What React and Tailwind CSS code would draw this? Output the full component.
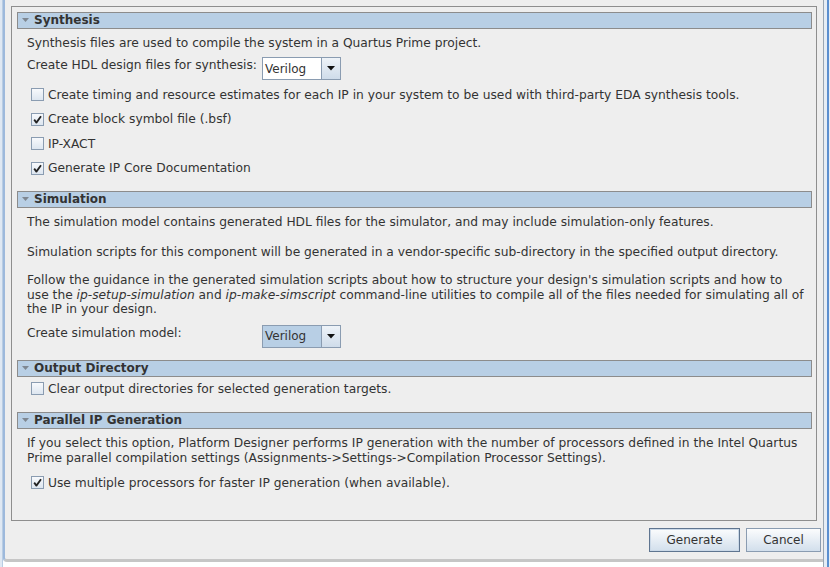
import React from "react";

const font = { fontFamily: '"DejaVu Sans", Verdana, sans-serif' };

const SectionHeader = ({ title }) => (
  <div className="h-[17px] flex items-center bg-[#b8cfe5] border border-[#8c8c8c]">
    <svg width="7" height="5" viewBox="0 0 7 5" className="ml-[4px] mr-[5px]">
      <polygon points="0,0 7,0 3.5,4" fill="#7f8791" />
    </svg>
    <span className="text-[12px] font-bold leading-[15px] text-[#333333]">{title}</span>
  </div>
);

const CheckBox = ({ checked }) => (
  <span className="w-[13px] h-[13px] shrink-0 border border-[#8a9cb1] bg-gradient-to-b from-[#f7f9fc] to-[#dde6f0] flex items-center justify-center">
    {checked && (
      <svg width="9" height="9" viewBox="0 0 9 9">
        <path d="M1.2 4.6 L3.4 7.6 L8 1.2" fill="none" stroke="#222" strokeWidth="1.8" strokeLinejoin="round" />
      </svg>
    )}
  </span>
);

const CheckRow = ({ checked, label, h = "h-[24px]" }) => (
  <div className={`${h} flex items-center pl-[14px] gap-[4px]`}>
    <CheckBox checked={checked} />
    <span>{label}</span>
  </div>
);

const Combo = ({ active }) => (
  <div className="w-[79px] h-[23px] flex border border-[#8a9cb1] bg-white">
    <div
      className={`flex-1 flex items-center pl-[2px] border-r border-[#8a9cb1] ${
        active ? "bg-[#b8cfe5]" : ""
      }`}
    >
      <span className="text-[12px]">Verilog</span>
    </div>
    <div className="w-[18px] flex items-center justify-center bg-gradient-to-b from-[#eef3f8] to-[#cfdcea]">
      <svg width="8" height="5" viewBox="0 0 8 5">
        <polygon points="0,0 8,0 4,4.5" fill="#111" />
      </svg>
    </div>
  </div>
);

const Button = ({ label, width, focused }) => (
  <button
    className={`${width} h-[24px] text-[12px] text-[#333333] bg-gradient-to-b from-[#fbfcfd] to-[#d2dfec] border ${
      focused ? "border-[#5f7590] shadow-[inset_0_0_0_1px_#cbd9e8]" : "border-[#8a9cb1]"
    }`}
  >
    {label}
  </button>
);

export default function App() {
  return (
    <div className="w-[830px] h-[567px] bg-white flex overflow-hidden text-[#333333]" style={font}>
      <div className="w-[3px] h-full bg-[#dfe8f3] border-r border-[#b9cde3]"></div>
      <div className="w-[820px] h-[562px] bg-[#eeeeee] border-l-[2px] border-[#9db9dc] border-b-[3px] border-b-[#c6c6c6] rounded-bl-[4px] flex flex-col">
        <div className="mt-[6px] ml-[6px] w-[806px] h-[515px] border border-[#8e8e8e] pl-[5px] pr-[4px] pt-[5px] text-[12.25px] leading-[16px]">
          {/* Synthesis */}
          <SectionHeader title="Synthesis" />
          <div className="h-[28px] flex items-center pl-[10px]">
            Synthesis files are used to compile the system in a Quartus Prime project.
          </div>
          <div className="h-[25px] flex items-start pl-[10px]">
            <span className="w-[235px]">Create HDL design files for synthesis:</span>
            <Combo />
          </div>
          <CheckRow
            h="h-[25px]"
            label="Create timing and resource estimates for each IP in your system to be used with third-party EDA synthesis tools."
          />
          <CheckRow h="h-[24px]" checked label="Create block symbol file (.bsf)" />
          <CheckRow h="h-[25px]" label="IP-XACT" />
          <CheckRow h="h-[24px]" checked label="Generate IP Core Documentation" />
          <div className="h-[11px]"></div>

          {/* Simulation */}
          <SectionHeader title="Simulation" />
          <div className="pl-[10px] mt-[6px]">
            The simulation model contains generated HDL files for the simulator, and may include simulation-only features.
          </div>
          <div className="pl-[10px] mt-[14px]">
            Simulation scripts for this component will be generated in a vendor-specific sub-directory in the specified output directory.
          </div>
          <div className="pl-[10px] mt-[13px] leading-[14.5px]">
            Follow the guidance in the generated simulation scripts about how to structure your design's simulation scripts and how to
            <br />
            use the <i>ip-setup-simulation</i> and <i>ip-make-simscript</i> command-line utilities to compile all of the files needed for
            simulating all of
            <br />
            the IP in your design.
          </div>
          <div className="h-[23px] mt-[8px] flex items-start pl-[10px]">
            <span className="w-[235px]">Create simulation model:</span>
            <Combo active />
          </div>

          {/* Output Directory */}
          <div className="mt-[12px]">
            <SectionHeader title="Output Directory" />
          </div>
          <CheckRow label="Clear output directories for selected generation targets." />

          {/* Parallel IP Generation */}
          <div className="mt-[11px]">
            <SectionHeader title="Parallel IP Generation" />
          </div>
          <div className="pl-[10px] mt-[7px] leading-[15px]">
            If you select this option, Platform Designer performs IP generation with the number of processors defined in the Intel Quartus
            <br />
            Prime parallel compilation settings (Assignments-&gt;Settings-&gt;Compilation Processor Settings).
          </div>
          <div className="mt-[5px]">
            <CheckRow checked label="Use multiple processors for faster IP generation (when available)." />
          </div>
        </div>
        <div className="mt-[7px] flex justify-end gap-[6px] pr-[2px]">
          <Button label="Generate" width="w-[91px]" focused />
          <Button label="Cancel" width="w-[75px]" />
        </div>
      </div>
      <div className="w-[7px] h-full bg-[#e6edf5] border-l border-[#9aa6b3] flex flex-col">
        <div className="ml-[3px] w-[2px] h-full bg-[#5b8fd0]"></div>
      </div>
    </div>
  );
}
